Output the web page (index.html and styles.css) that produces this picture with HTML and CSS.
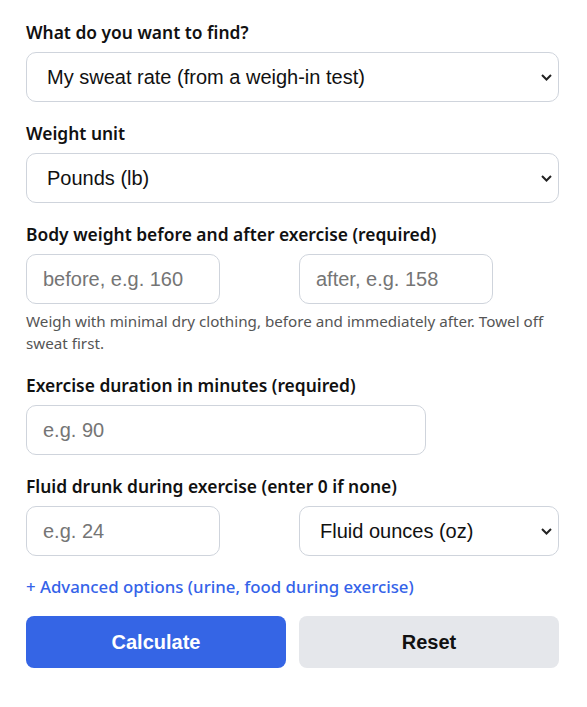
FILE: index.html
```html
<!DOCTYPE html>
<html lang="en">
<head>
    <meta charset="UTF-8">
    <meta name="viewport" content="width=device-width, initial-scale=1.0">
    <title>Sweat Rate Calculator</title>
    <link rel="stylesheet" href="styles.css">
</head>
<body>
    <form class="calc" onsubmit="return false;">
        <div class="field">
            <label for="mode">What do you want to find?</label>
            <select id="mode" class="control">
                <option>My sweat rate (from a weigh-in test)</option>
                <option>How much to drink</option>
            </select>
        </div>

        <div class="field">
            <label for="unit">Weight unit</label>
            <select id="unit" class="control">
                <option>Pounds (lb)</option>
                <option>Kilograms (kg)</option>
            </select>
        </div>

        <div class="field">
            <label for="before">Body weight before and after exercise (required)</label>
            <div class="pair">
                <input type="number" id="before" class="control short" placeholder="before, e.g. 160">
                <input type="number" id="after" class="control short" placeholder="after, e.g. 158">
            </div>
            <p class="hint">Weigh with minimal dry clothing, before and immediately after. Towel off sweat first.</p>
        </div>

        <div class="field">
            <label for="duration">Exercise duration in minutes (required)</label>
            <input type="number" id="duration" class="control medium" placeholder="e.g. 90">
        </div>

        <div class="field">
            <label for="fluid">Fluid drunk during exercise (enter 0 if none)</label>
            <div class="pair">
                <input type="number" id="fluid" class="control short" placeholder="e.g. 24">
                <select id="fluidUnit" class="control">
                    <option>Fluid ounces (oz)</option>
                    <option>Milliliters (ml)</option>
                </select>
            </div>
        </div>

        <a href="#" class="advanced">+ Advanced options (urine, food during exercise)</a>

        <div class="actions">
            <button type="submit" class="btn primary">Calculate</button>
            <button type="reset" class="btn secondary">Reset</button>
        </div>
    </form>
</body>
</html>
```

FILE: styles.css
```css
body {
    margin: 0;
    padding: 20px 28px 20px 26px;
    font-family: "Noto Sans", "Open Sans", sans-serif;
    color: #111;
    background: #fff;
}
.calc { max-width: 533px; }
.field { margin-bottom: 19px; }
label {
    display: block;
    font-size: 17.4px;
    font-weight: 600;
    line-height: 24px;
    margin-bottom: 8px;
}
.control {
    display: block;
    box-sizing: border-box;
    width: 100%;
    height: 50px;
    padding: 0 16px;
    font-family: "Liberation Sans", Arial, sans-serif;
    font-size: 20px;
    color: #111;
    background-color: #fff;
    border: 1px solid #cfd4dc;
    border-radius: 10px;
}
.control::placeholder { color: #757575; }
select.control {
    appearance: none;
    -webkit-appearance: none;
    padding-left: 20px;
    padding-right: 36px;
    background-image: url("data:image/svg+xml,%3Csvg xmlns='http://www.w3.org/2000/svg' width='11' height='7' viewBox='0 0 11 7'%3E%3Cpath d='M1 1l4.5 4.5L10 1' fill='none' stroke='%23222' stroke-width='2'/%3E%3C/svg%3E");
    background-repeat: no-repeat;
    background-position: right 6px center;
    background-size: 11px 7px;
}
.short { width: 194px; }
.medium { width: 400px; }
.pair {
    display: grid;
    grid-template-columns: 1fr 1fr;
    gap: 13px;
}
.hint {
    margin: 6px 0 0;
    font-size: 15.2px;
    line-height: 22px;
    color: #555;
}
.advanced {
    display: block;
    font-size: 16.8px;
    font-weight: 500;
    line-height: 24px;
    color: #3563e9;
    text-decoration: none;
    margin-bottom: 17px;
}
.actions {
    display: grid;
    grid-template-columns: 1fr 1fr;
    gap: 13px;
}
.btn {
    height: 52px;
    border: none;
    border-radius: 8px;
    font-family: "Liberation Sans", Arial, sans-serif;
    font-size: 20px;
    font-weight: bold;
    cursor: pointer;
}
.primary { background-color: #3565e5; color: #fff; }
.secondary { background-color: #e5e7eb; color: #111; }
```
